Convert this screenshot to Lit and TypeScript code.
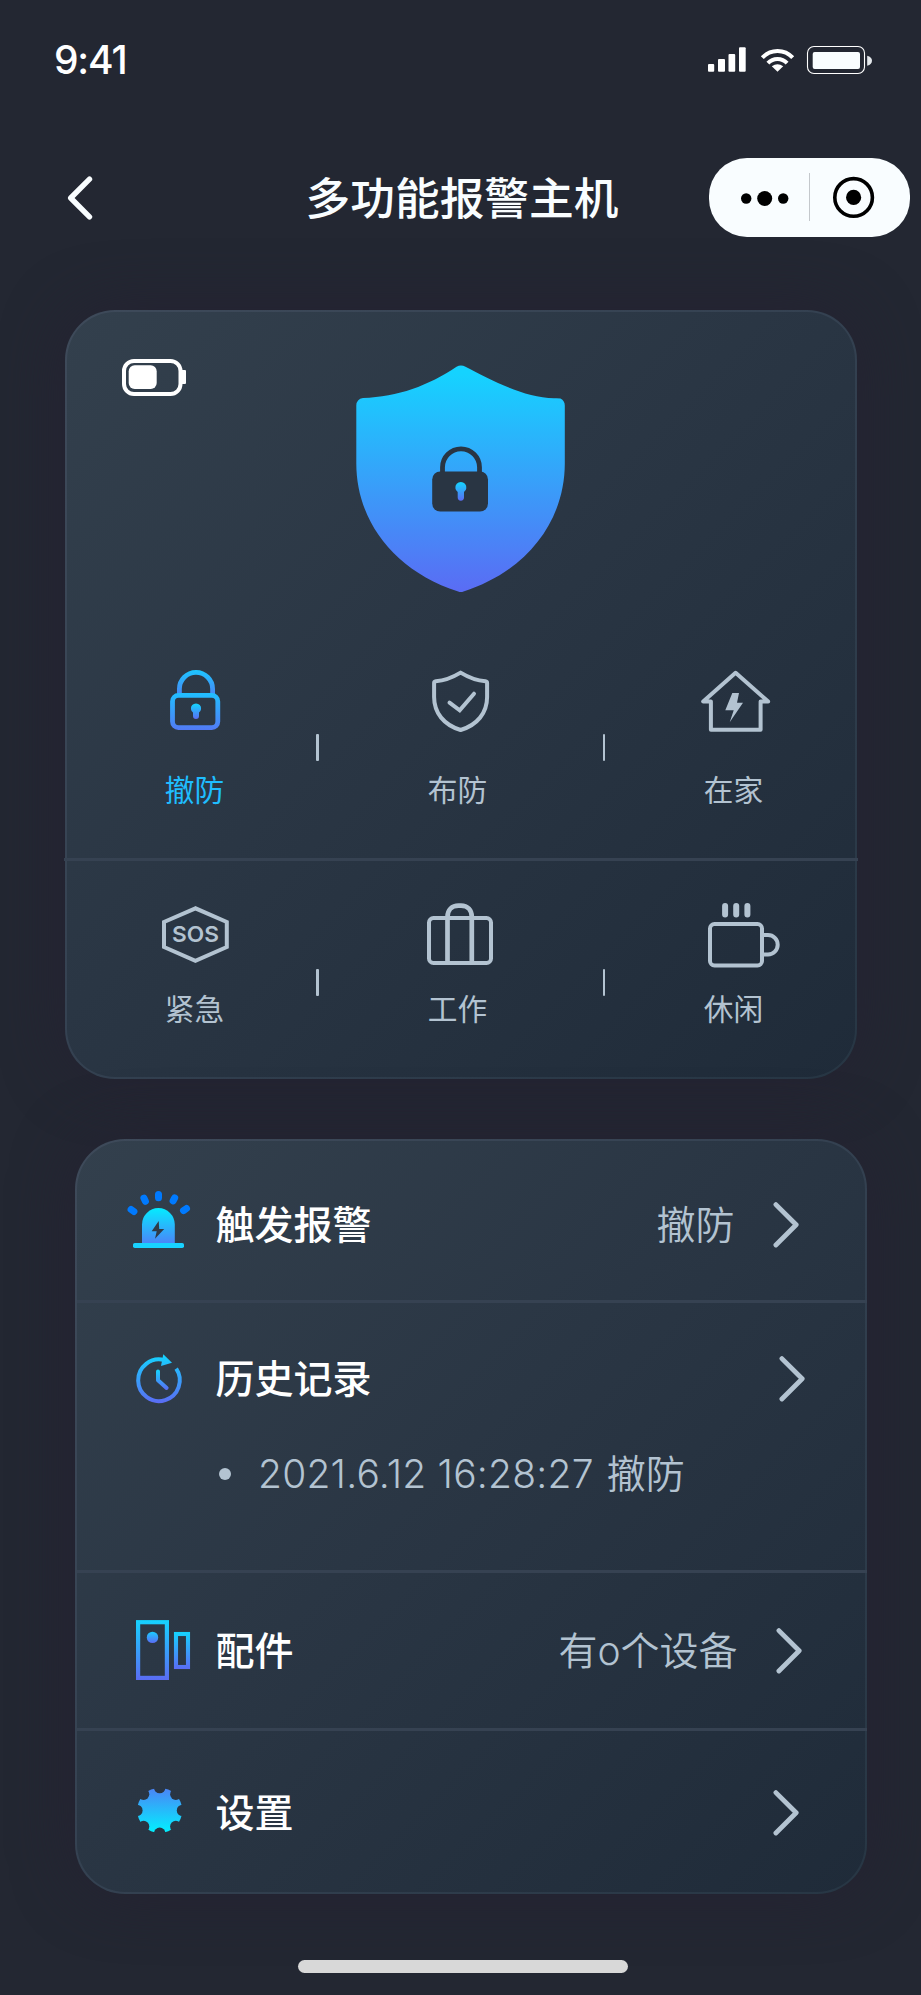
import { LitElement, html, svg, css } from "lit";
import { customElement } from "lit/decorators.js";

const lg = (id: string, y1: number, y2: number, a = "#15d3ff", b = "#5a6cf4") => svg`
  <linearGradient id=${id} gradientUnits="userSpaceOnUse" x1="0" x2="0" y1=${y1} y2=${y2}>
    <stop offset="0" stop-color=${a}></stop><stop offset="1" stop-color=${b}></stop>
  </linearGradient>`;

// Mode icons: each view box is 90 x 70, centred on its label.
const lockIcon = html`<svg width="90" height="70" viewBox="149 666 90 70" fill="none">
  <defs>${lg("lk1", 670, 695, "#1cc6ff", "#4a86f5")}${lg("lk2", 693, 730, "#20bfff", "#527af5")}${lg("lk3", 704, 719)}</defs>
  <path d="M179.4 695V689a16.6 16.6 0 0 1 33.2 0V695" stroke="url(#lk1)" stroke-width="4.8"/>
  <rect x="172.5" y="695.4" width="45.3" height="32.2" rx="6" stroke="url(#lk2)" stroke-width="4.8"/>
  <path d="M193 712.6A5.1 5.1 0 1 1 199 712.6V716a3 3 0 0 1-6 0Z" fill="url(#lk3)"/>
</svg>`;

const checkIcon = html`<svg width="90" height="70" viewBox="412 666 90 70" fill="none" stroke="currentColor" stroke-width="4" stroke-linejoin="round" stroke-linecap="round">
  <path d="M460.6 672.6C452 677.8 445 680.6 435.8 681.2Q434.1 681.4 434.1 683V697C434.1 713 444 725 460.6 730C477.2 725 487.1 713 487.1 697V683Q487.1 681.4 485.4 681.2C476.2 680.6 469.2 677.8 460.6 672.6Z"/>
  <path d="M449.5 702.7L459.7 710.3L474 693.7" stroke-linejoin="miter"/>
</svg>`;

const homeIcon = html`<svg width="90" height="70" viewBox="688 666 90 70" fill="none">
  <path d="M735.6 672.8L703.2 701.5H710.9V729.8H760.6V701.5H768.2Z" stroke="currentColor" stroke-width="4" stroke-linejoin="round"/>
  <path d="M732.3 693H739L737 702.8H743L729.7 722.3L733.7 710.2H725.3Z" fill="currentColor"/>
</svg>`;

const sosIcon = html`<svg width="90" height="70" viewBox="149 900 90 70" fill="none">
  <path d="M195.4 908.3L164 922V947L195.4 960.8L226.8 947V922Z" stroke="currentColor" stroke-width="4"/>
  <text x="195.6" y="941.7" text-anchor="middle" textLength="47" lengthAdjust="spacingAndGlyphs" class="sos">SOS</text>
</svg>`;

const caseIcon = html`<svg width="90" height="70" viewBox="412 900 90 70" fill="none" stroke="currentColor" stroke-width="4">
  <rect x="429" y="918" width="62" height="45" rx="4.5"/>
  <path d="M447.5 963V917C447.5 910 452 905.6 458.5 905.6H461C467.5 905.6 471.8 910 471.8 917V963" stroke-width="4.7"/>
</svg>`;

const cupIcon = html`<svg width="90" height="70" viewBox="688 900 90 70" fill="none" stroke="currentColor" stroke-width="4" class="spill">
  <rect x="710" y="924" width="52" height="41.5" rx="4.5"/>
  <path d="M763 935H768a9.7 9.7 0 0 1 0 19.4H763"/>
  <path d="M725.1 906V914.6M736.2 906V914.6M747.4 906V914.6" stroke-width="6" stroke-linecap="round"/>
</svg>`;

// Menu icons: each view box is 84 x 80.
const sirenIcon = html`<svg width="84" height="80" viewBox="120 1185 84 80" fill="none">
  <defs>${lg("sr", 1208, 1243, "#04ecff", "#4a86f8")}</defs>
  <path d="M142 1243.5V1224.5a16.4 16.4 0 0 1 32.8 0V1243.5Z" fill="url(#sr)"/>
  <rect x="133" y="1243" width="51" height="5" rx="1.8" fill="#18d2ff"/>
  <path d="M158.7 1221L151.7 1231.3H156.7L155 1238.8L164.2 1229H159.2Z" fill="#2f3b48"/>
  <path d="M158.5 1194.5V1197.7M143.9 1198.1L145.4 1201.3M174.7 1197.8L173.1 1200.9M131.1 1209.5L133.9 1211.5M186.5 1208.5L183.5 1210.6" stroke="#007aff" stroke-width="7" stroke-linecap="round"/>
</svg>`;

const historyIcon = html`<svg width="84" height="80" viewBox="120 1339 84 80" fill="none">
  <defs>${lg("hs1", 1355, 1403)}${lg("hs2", 1370, 1390)}</defs>
  <path d="M176.2 1368.6A20.8 20.8 0 1 1 164.5 1360.2" stroke="url(#hs1)" stroke-width="4"/>
  <path d="M163.3 1354.3L172 1362.7L161 1366Z" fill="url(#hs1)"/>
  <path d="M158 1371.5V1380.3L166.6 1388" stroke="url(#hs2)" stroke-width="4" stroke-linecap="round" stroke-linejoin="round"/>
</svg>`;

const partsIcon = html`<svg width="84" height="80" viewBox="120 1611 84 80" fill="none">
  <defs>${lg("pt1", 1620, 1680)}${lg("pt2", 1632, 1669)}${lg("pt3", 1631, 1643)}</defs>
  <rect x="138.1" y="1622.2" width="28.8" height="55.7" stroke="url(#pt1)" stroke-width="4.2"/>
  <rect x="176" y="1634" width="12" height="33" stroke="url(#pt2)" stroke-width="4.1"/>
  <circle cx="152.5" cy="1637.4" r="5.7" fill="url(#pt3)"/>
</svg>`;

const gearIcon = html`<svg width="84" height="80" viewBox="120 1773 84 80">
  <defs>${lg("gr", 1789, 1832, "#4a86f6", "#02f0ff")}</defs>
  <mask id="teeth" maskUnits="userSpaceOnUse" x="130" y="1780" width="60" height="60">
    <circle cx="159.7" cy="1810.4" r="22.5" fill="#fff"/>
    ${[0, 45, 90, 135, 180, 225, 270, 315].map(
      (a) => svg`<circle cx="159.7" cy="1787.6" r="5.7" fill="#000" transform="rotate(${a} 159.7 1810.4)"/>`
    )}
  </mask>
  <rect x="136" y="1787" width="48" height="48" fill="url(#gr)" mask="url(#teeth)"/>
</svg>`;

const chevron = html`<svg width="26" height="46" viewBox="0 0 26 46" fill="none" stroke="currentColor" stroke-width="4.8" stroke-linecap="round" stroke-linejoin="round">
  <path d="M2.9 2.6L23.2 22.8L2.9 43"/>
</svg>`;

const modeRows = [
  [
    { icon: lockIcon, label: "撤防", on: true },
    { icon: checkIcon, label: "布防" },
    { icon: homeIcon, label: "在家" },
  ],
  [
    { icon: sosIcon, label: "紧急" },
    { icon: caseIcon, label: "工作" },
    { icon: cupIcon, label: "休闲" },
  ],
];

@customElement("app-root")
export class AppRoot extends LitElement {
  static styles = css`
    :host {
      display: flex;
      flex-direction: column;
      box-sizing: border-box;
      width: 921px;
      height: 1995px;
      overflow: hidden;
      background: #232732;
      color: #fff;
      font-family: Inter, "Noto Sans CJK SC", sans-serif;
      --muted: #b3c3d1;
    }
    svg { display: block; flex: none; }
    .status {
      display: flex;
      justify-content: space-between;
      align-items: center;
      height: 120px;
      padding: 0 48px 0 54px;
      box-sizing: border-box;
      flex: none;
    }
    .time { font-size: 39px; font-weight: 500; letter-spacing: -1.2px; line-height: 48px; }
    .nav {
      display: grid;
      grid-template-columns: 1fr auto 1fr;
      align-items: center;
      height: 79px;
      margin-top: 38px;
      padding: 0 11px;
      color: #f9fdff;
      flex: none;
    }
    .back { margin-left: 56px; }
    .title { margin: 2px 0 0 3px; font-size: 44.7px; font-weight: 500; line-height: 60px; }
    .capsule {
      justify-self: end;
      width: 201px;
      height: 79px;
      border-radius: 38px;
      background: #f9fdff;
    }
    .card {
      box-sizing: border-box;
      width: 792px;
      border: 2px solid transparent;
      border-radius: 50px;
      background:
        linear-gradient(135deg, #33404d 0%, #2a3644 45%, #1f2b39 100%) padding-box,
        linear-gradient(135deg, #3e4a5a 0%, #354252 45%, #273644 100%) border-box;
      box-shadow: 0 0 60px #252232;
      flex: none;
    }
    .host-card { margin: 73px 0 0 65px; height: 769px; }
    .menu-card { margin: 60px 0 0 75px; height: 755px; }
    .hero {
      display: grid;
      grid-template-columns: 1fr auto 1fr;
      align-items: start;
      height: 300px;
      box-sizing: border-box;
      padding: 47px 54px 0 54px;
    }
    .shield { margin-top: 5.5px; }
    .modes { display: flex; box-sizing: border-box; color: var(--muted); }
    .modes.r0 { height: 246px; padding-top: 54px; }
    .modes.r1 { height: 216px; padding-top: 39px; }
    .mode { width: 90px; display: flex; flex-direction: column; align-items: center; }
    .mode:first-child { margin-left: 82px; }
    .mode.on { color: #1fbdff; }
    .mode span { font-size: 29.7px; line-height: 36px; white-space: nowrap; padding-left: 1px; }
    .r0 .mode span { margin-top: 36px; }
    .r1 .mode span { margin-top: 21px; }
    .tick { width: 2.5px; height: 27px; background: var(--muted); border-radius: 1px; }
    .r0 .tick { margin-top: 68px; }
    .r1 .tick { margin-top: 69px; }
    .tick.a { margin-left: 77.2px; margin-right: 93.3px; }
    .tick.b { margin-left: 101px; margin-right: 82.5px; }
    .line { height: 3px; background: #364252; }
    .host-card > .line { margin: 0 -3px; }
    .menu-card > .line { margin-right: -2px; }
    .item { display: flex; align-items: center; padding-left: 43px; }
    .item.alarm { height: 167px; margin-bottom: -8px; }
    .label { font-size: 39px; font-weight: 500; line-height: 56px; margin-left: 11.5px; flex: 1; }
    .value { font-size: 39px; font-weight: 350; line-height: 56px; color: var(--muted); }
    .go { color: var(--muted); }
    .alarm .go { margin: 0 66.5px 0 38px; }
    .history { height: 267px; box-sizing: border-box; padding-top: 35.5px; }
    .history .item { height: 80px; }
    .history .go { margin-right: 60.5px; }
    .parts { height: 155px; }
    .parts .go { margin: 0 63px 0 38.5px; }
    .settings { height: 163px; }
    .settings .go { margin-right: 66.5px; }
    .record { display: flex; align-items: center; margin-top: 27.5px; padding-left: 141.5px; color: var(--muted); }
    .dot { width: 12.5px; height: 12.5px; border-radius: 50%; background: var(--muted); margin-right: 27px; }
    .record .stamp { font-weight: 300; letter-spacing: 0.22px; margin-right: 13px; white-space: pre; }
    .sos { font: 600 22px Inter, sans-serif; fill: currentColor; stroke: none; }
    .spill { overflow: visible; }
    .indicator {
      width: 330px;
      height: 13px;
      margin: 66px 0 0 298px;
      border-radius: 7px;
      background: #d8d8d8;
      flex: none;
    }
  `;

  render() {
    return html`
      <div class="status">
        <span class="time">9:41</span>
        <svg width="166" height="30" viewBox="707 45 166 30" fill="#fff">
          <rect x="708" y="64" width="6.2" height="7.7" rx="1"/>
          <rect x="718" y="59" width="7" height="12.7" rx="1"/>
          <rect x="728.5" y="54" width="6.7" height="17.7" rx="1"/>
          <rect x="739" y="47.3" width="6.7" height="24.4" rx="1"/>
          <g fill="none" stroke="#fff" stroke-width="4">
            <path d="M762.3 57.7A20.5 20.5 0 0 1 792.7 57.7"/>
            <path d="M767.9 63.2A13.2 13.2 0 0 1 787.1 63.2"/>
          </g>
          <path d="M777.5 71.7L771.8 66.3Q777.5 62 783.2 66.3Z"/>
          <rect x="807.5" y="46.5" width="57" height="27" rx="6.5" fill="none" stroke="#fff" stroke-width="1.1"/>
          <rect x="812.7" y="52" width="47.3" height="17" rx="2" fill="#f9fdff"/>
          <path d="M867.2 55.7Q872 57 872 60.7T867.2 65.7Z" fill="#e4e8ec"/>
        </svg>
      </div>

      <div class="nav">
        <svg class="back" width="26" height="44" viewBox="67 175.5 26 44" fill="none" stroke="#f9fdff" stroke-width="5.4" stroke-linecap="round" stroke-linejoin="round">
          <path d="M89.5 178.7L70.7 197.5L89.5 216.3"/>
        </svg>
        <h1 class="title">多功能报警主机</h1>
        <div class="capsule">
          <svg width="201" height="79" viewBox="709 158 201 79">
            <circle cx="746.2" cy="198.5" r="5.2"/>
            <circle cx="764.7" cy="198.5" r="7.5"/>
            <circle cx="783.2" cy="198.5" r="5.2"/>
            <rect x="809" y="173" width="1" height="48" fill="#c4c8cc"/>
            <circle cx="853.6" cy="197.4" r="18.8" fill="none" stroke="#000" stroke-width="3.6"/>
            <circle cx="853.6" cy="197.4" r="7.6"/>
          </svg>
        </div>
      </div>

      <section class="card host-card">
        <div class="hero">
          <svg width="66" height="38" viewBox="121 359 66 38" fill="none">
            <rect x="124" y="361" width="56.5" height="33" rx="10" stroke="#fff" stroke-width="4"/>
            <rect x="128.7" y="365.2" width="28" height="23.8" rx="6" fill="#fff"/>
            <rect x="181" y="370" width="5" height="14" rx="1" fill="#fff"/>
          </svg>
          <svg class="shield" width="210" height="228" viewBox="356 364.5 210 228" fill="none">
            <defs>${lg("sh1", 372, 591)}${lg("sh2", 482, 500)}</defs>
            <path d="M456.5 366.3Q460.9 363.6 465.5 366.3C490 379 524 397.5 554 397.7Q558.5 397.5 560.5 398Q564.8 400.4 564.8 405V463C564.8 520 527.5 570.5 463.5 591Q460.9 592 458.2 591C394 570.5 356.3 520 356.3 463V405Q356.5 398.5 363 397.5C398 396.5 428.5 385 456.5 366.3Z" fill="url(#sh1)"/>
            <path d="M442.5 474V466.8a18.5 18.5 0 0 1 37 0V474" stroke="#293543" stroke-width="4.8"/>
            <rect x="432.2" y="471" width="55.8" height="40" rx="8" fill="#293543"/>
            <path d="M457.7 491.5A5.5 5.5 0 1 1 464 491.5V497a3.15 3.15 0 0 1-6.3 0Z" fill="url(#sh2)"/>
          </svg>
        </div>
        ${modeRows.map(
          (row, i) => html`
            ${i ? html`<div class="line"></div>` : ""}
            <div class="modes r${i}">
              ${row.map(
                (m: any, j) => html`
                  <div class="mode ${m.on ? "on" : ""}">${m.icon}<span>${m.label}</span></div>
                  ${j < 2 ? html`<i class="tick ${j ? "b" : "a"}"></i>` : ""}
                `
              )}
            </div>
          `
        )}
      </section>

      <section class="card menu-card">
        <div class="item alarm">
          ${sirenIcon}<span class="label">触发报警</span><span class="value">撤防</span><span class="go">${chevron}</span>
        </div>
        <div class="line"></div>
        <div class="history">
          <div class="item">
            ${historyIcon}<span class="label">历史记录</span><span class="go">${chevron}</span>
          </div>
          <div class="record">
            <i class="dot"></i><span class="value stamp">2021.6.12 16:28:27</span><span class="value">撤防</span>
          </div>
        </div>
        <div class="line"></div>
        <div class="item parts">
          ${partsIcon}<span class="label">配件</span><span class="value">有o个设备</span><span class="go">${chevron}</span>
        </div>
        <div class="line"></div>
        <div class="item settings">
          ${gearIcon}<span class="label">设置</span><span class="go">${chevron}</span>
        </div>
      </section>

      <div class="indicator"></div>
    `;
  }
}
